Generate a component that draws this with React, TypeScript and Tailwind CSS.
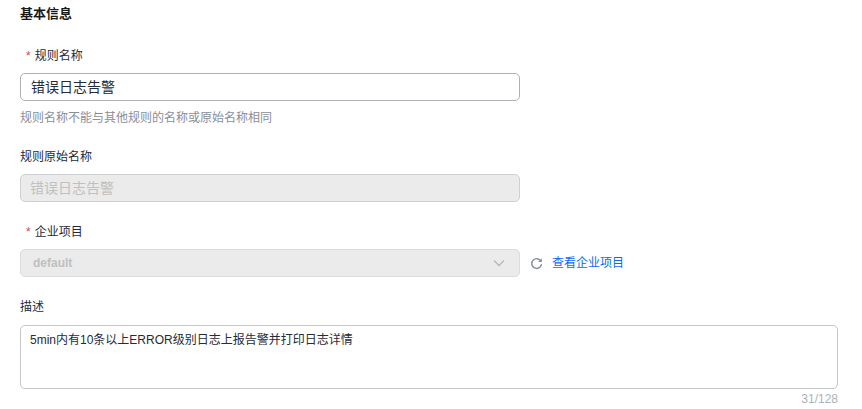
import React from "react";

const font = { fontFamily: '"Liberation Sans", Arial, "Noto Sans CJK SC", sans-serif' };

function Star() {
  return <span className="text-[#e54545] mr-[4px] text-[12px]">*</span>;
}

export default function App() {
  return (
    <div className="w-[862px] h-[409px] bg-white overflow-hidden px-[20px] pt-[5px] text-[#252b3a]" style={font}>
      <div className="text-[13px] font-bold leading-[18px] text-[#191919]">基本信息</div>

      <div className="mt-[24px] flex items-center h-[18px] text-[12px] pl-[6px] text-[#252b3a]">
        <Star />规则名称
      </div>
      <div className="mt-[8px] w-[500px] h-[28px] border border-[#adb0b8] rounded-[5px] flex items-center px-[10px] text-[14px] text-[#252b3a]">
        错误日志告警
      </div>
      <div className="mt-[8px] text-[12px] leading-[18px] text-[#8a8e99]">规则名称不能与其他规则的名称或原始名称相同</div>

      <div className="mt-[21px] h-[18px] flex items-center text-[12px] text-[#252b3a]">规则原始名称</div>
      <div className="mt-[8px] w-[500px] h-[28px] border border-[#cfd0d3] bg-[#ebebeb] rounded-[5px] flex items-center px-[9px] text-[14px] text-[#c0c0c0]">
        错误日志告警
      </div>

      <div className="mt-[21px] flex items-center h-[18px] text-[12px] pl-[6px]">
        <Star />企业项目
      </div>
      <div className="mt-[8px] flex items-center">
        <div className="w-[500px] h-[28px] border border-[#dcdcdc] bg-[#ebebeb] rounded-[5px] flex items-center justify-between pl-[12px] pr-[14px] text-[12px] font-bold text-[#c0c0c0]">
          <span>default</span>
          <svg width="12" height="8" viewBox="0 0 12 8" fill="none">
            <path d="M1 1.5 L6 6.5 L11 1.5" stroke="#b8b8b8" strokeWidth="1.3" />
          </svg>
        </div>
        <svg className="ml-[10px]" width="13" height="13" viewBox="0 0 16 16" fill="none">
          <path d="M13.5 5.2 A6 6 0 1 0 14 9.5" stroke="#8a8e99" strokeWidth="1.8" strokeLinecap="round" />
          <path d="M14.5 1.5 L14.5 6 L10 6 Z" fill="#8a8e99" />
        </svg>
        <span className="ml-[9px] text-[12px] text-[#0a6cf0]">查看企业项目</span>
      </div>

      <div className="mt-[21px] h-[18px] flex items-center text-[12px]">描述</div>
      <div className="mt-[9px] w-[818px] h-[64px] border border-[#c4c6cc] rounded-[5px] px-[9px] py-[5px] text-[12px] leading-[18px] text-[#252b3a]">
        5min内有10条以上ERROR级别日志上报告警并打印日志详情
      </div>
      <div className="w-[818px] text-right text-[12px] leading-[18px] text-[#adb0b8] mt-[1px]">31/128</div>
    </div>
  );
}
